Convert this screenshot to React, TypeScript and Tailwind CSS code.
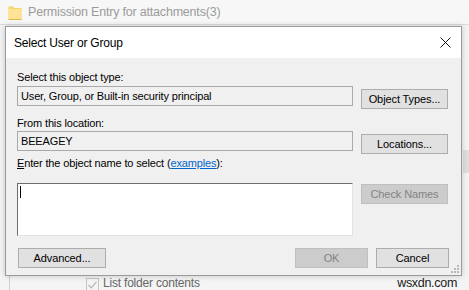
import React from 'react'

const font = { fontFamily: '"Liberation Sans", Arial, sans-serif' }

function FolderIcon() {
  return (
    <svg width="14" height="15" viewBox="0 0 14 15" className="shrink-0">
      <path d="M0.5 1.5 H5 L6.5 3 H13.5 V14.5 H0.5 Z" fill="#f6d36b" />
      <path d="M0.5 4 H13.5 V14.5 H0.5 Z" fill="#ffe394" />
      <path d="M0.5 14.5 H13.5" stroke="#e0b84a" strokeWidth="1" />
    </svg>
  )
}

function CloseIcon() {
  return (
    <svg width="11" height="11" viewBox="0 0 11 11">
      <path d="M0.5 0.5 L10.5 10.5 M10.5 0.5 L0.5 10.5" stroke="#111" strokeWidth="1" />
    </svg>
  )
}

function Grip() {
  return (
    <svg width="8" height="8" viewBox="0 0 8 8" className="absolute bottom-[2px] right-[2px]">
      {[
        [6, 0],
        [6, 3],
        [3, 3],
        [6, 6],
        [3, 6],
        [0, 6],
      ].map(([x, y], i) => (
        <rect key={i} x={x} y={y} width="2" height="2" fill="#b8b8b8" />
      ))}
    </svg>
  )
}

function Button({ label, disabled = false, className = '' }: { label: React.ReactNode; disabled?: boolean; className?: string }) {
  return (
    <div
      className={`flex h-[20px] shrink-0 items-center justify-center border text-[11px] leading-none tracking-[-0.1px] ${
        disabled ? 'border-[#bfbfbf] bg-[#cccccc] text-[#838383]' : 'border-[#adadad] bg-[#e1e1e1] text-black'
      } ${className}`}
    >
      {label}
    </div>
  )
}

export default function App() {
  return (
    <div className="relative h-[290px] w-[469px] overflow-hidden bg-[#f4f4f4]" style={font}>
      {/* parent window behind */}
      <div className="flex h-[25px] items-center gap-[6px] border-b border-[#dcdcdc] bg-[#f7f7f7] pl-[8px]">
        <FolderIcon />
        <span className="text-[12.5px] tracking-[-0.2px] text-[#9b9b9b]">Permission Entry for attachments(3)</span>
      </div>
      <div className="absolute right-0 top-[150px] h-[23px] w-[6px] bg-[#dedede]" />
      <div className="absolute bottom-0 left-[9px] h-[14px] w-px bg-[#d0d0d0]" />
      <div className="absolute left-[86px] top-[277px] flex items-start gap-[4px]">
        <div className="mt-px flex h-[13px] w-[13px] items-center justify-center border border-[#c4c4c4] bg-[#f4f4f4]">
          <svg width="9" height="8" viewBox="0 0 9 8">
            <path d="M0.5 4 L3.2 6.8 L8.5 0.8" fill="none" stroke="#b5b5b5" strokeWidth="1.2" />
          </svg>
        </div>
        <span className="text-[12px] leading-[13px] tracking-[-0.2px] text-[#666]">List folder contents</span>
      </div>

      {/* dialog */}
      <div className="absolute left-[5px] top-[26px] w-[457px] border border-[#9a9a9a] bg-[#f0f0f0] shadow-[0_0_6px_rgba(0,0,0,0.2)]">
        <div className="flex h-[31px] items-center justify-between bg-white pl-[8px] pr-[10px]">
          <span className="text-[12px] tracking-[-0.2px] text-black">Select User or Group</span>
          <CloseIcon />
        </div>
        <div className="relative flex flex-col px-[11px] pb-[7px] pt-[12px] text-[11px] tracking-[-0.15px] text-black">
          <div className="h-[15px] leading-[15px]">Select this object type:</div>
          <div className="mt-px flex items-start gap-[8px]">
            <div className="flex h-[20px] w-[336px] items-center border border-[#a9a9a9] bg-[#f0f0f0] pl-[3px]">
              User, Group, or Built-in security principal
            </div>
            <Button label="Object Types..." className="mt-[3px] w-[87px]" />
          </div>
          <div className="mt-[7px] h-[15px] leading-[15px]">From this location:</div>
          <div className="flex items-start gap-[8px]">
            <div className="flex h-[20px] w-[336px] items-center border border-[#a9a9a9] bg-[#f0f0f0] pl-[3px]">BEEAGEY</div>
            <Button label="Locations..." className="mt-[3px] w-[87px]" />
          </div>
          <div className="mt-[2px] h-[15px] leading-[15px]">
            <span className="underline">E</span>nter the object name to select (
            <span className="text-[#0066cc] underline">examples</span>):
          </div>
          <div className="mt-[12px] flex items-start gap-[8px]">
            <div className="h-[53px] w-[336px] border border-b-[#e3e3e3] border-l-[#6e6e6e] border-r-[#e3e3e3] border-t-[#6e6e6e] bg-white pl-[2px] pt-[2px]">
              <div className="h-[12px] w-px bg-black" />
            </div>
            <Button label="Check Names" disabled className="mt-px w-[87px]" />
          </div>
          <div className="mt-[12px] flex items-center">
            <Button label="Advanced..." className="ml-px w-[88px]" />
            <div className="flex-1" />
            <Button label="OK" disabled className="w-[73px]" />
            <Button label="Cancel" className="ml-[8px] w-[73px]" />
            <div className="w-[1px]" />
          </div>
          <Grip />
        </div>
      </div>

      <div className="absolute right-[12px] top-[277px] text-[12.5px] leading-[13px] tracking-[-0.3px] text-[#1a1a1a]">wsxdn.com</div>
    </div>
  )
}
